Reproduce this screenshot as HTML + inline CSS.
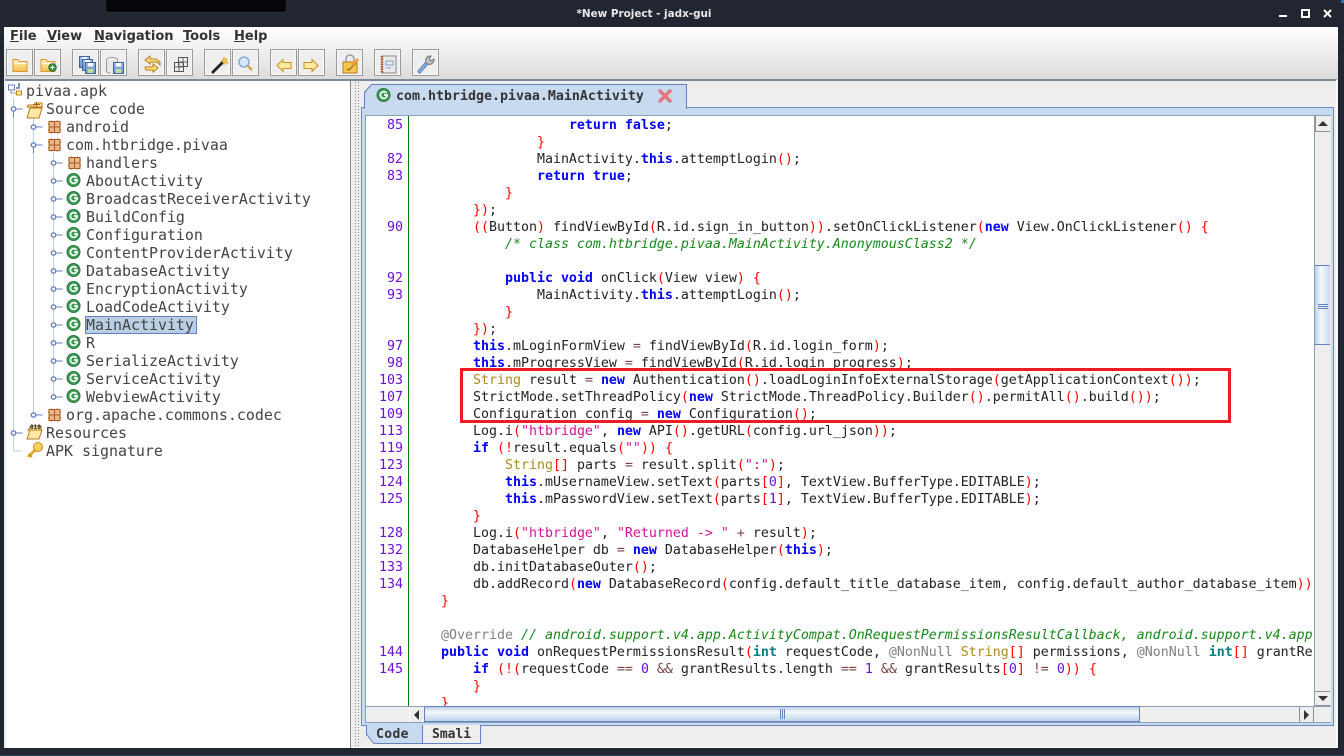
<!DOCTYPE html>
<html><head><meta charset="utf-8"><title>jadx-gui</title>
<style>
html,body{margin:0;padding:0;width:1344px;height:756px;overflow:hidden;background:#222630}
div,pre,span{box-sizing:border-box}
.abs{position:absolute}
#win{position:absolute;left:4px;top:27px;width:1334px;height:721px;background:#eee}
.menu{position:absolute;top:28px;font:bold 13px/18px "DejaVu Sans",sans-serif;color:#333}
.menu u{text-decoration:underline}
.btn{position:absolute;top:49px;width:27px;height:27px;border:1px solid #9a9a9a;box-shadow:inset 0 0 0 1px #f8f8f8;background:#eee}
.tr{position:absolute;height:18px;font:14.95px/18px "DejaVu Sans Mono",monospace;color:#444;white-space:pre}
#code{position:absolute;left:366px;top:116px;width:948px;height:590px;background:#fff;overflow:hidden}
#nums{position:absolute;left:0;top:1px;width:37px;text-align:right;font:13.29px/17px "DejaVu Sans Mono",monospace;color:#6d0fd8;white-space:pre}
#src{position:absolute;left:75px;top:1px;margin:0;font:13.29px/17px "DejaVu Sans Mono",monospace;color:#222;white-space:pre}
.k{color:#00f;font-weight:bold}.p{color:#f00}.o{color:#804040}.s{color:#d9109c}.t{color:#ae8a19}.i{color:#008080;font-weight:bold}
.c{color:#168a16;font-style:italic}.a{color:#808080}.n{color:#6d0fd8}
</style></head><body>
<div class="abs" style="left:105px;top:0;width:182px;height:13px;background:#05060a;border-radius:0 0 4px 4px;border:1px solid #2a2c33;border-top:0"></div>
<div class="abs" style="left:0;top:6px;width:1288px;text-align:center;font:bold 10.4px/16px 'DejaVu Sans',sans-serif;color:#e8e8e8">*New Project - jadx-gui</div>
<svg class="abs" style="left:1270px;top:5px" width="70" height="18">
<rect x="9" y="10" width="8" height="2" fill="#fff"/>
<rect x="32" y="5" width="7" height="7" fill="none" stroke="#fff" stroke-width="2"/>
<path d="M54 5l7 7M61 5l-7 7" stroke="#fff" stroke-width="2"/>
</svg>
<div class="abs" style="left:1341px;top:0;width:3px;height:3px;background:#2a6fb0"></div>
<div class="abs" style="left:0;top:755px;width:1344px;height:1px;background:#26465e"></div>
<div id="win"></div>
<div class="abs" style="left:4px;top:27px;width:1334px;height:52px;background:linear-gradient(#fff,#dcdcdc)"></div>
<div class="abs" style="left:5px;top:79px;width:1332px;height:2px;background:#7b8a9a"></div>
<div class="abs" style="left:1336px;top:80px;width:1px;height:668px;background:#fff"></div>
<div class="abs" style="left:4px;top:747px;width:1334px;height:1px;background:#fff"></div>

<div class="menu" style="left:10px"><u>F</u>ile</div>
<div class="menu" style="left:47px"><u>V</u>iew</div>
<div class="menu" style="left:94px"><u>N</u>avigation</div>
<div class="menu" style="left:183px"><u>T</u>ools</div>
<div class="menu" style="left:234px"><u>H</u>elp</div>

<div class="btn" style="left:6px"></div><div class="btn" style="left:34px"></div>
<div class="btn" style="left:72px"></div><div class="btn" style="left:100px"></div>
<div class="btn" style="left:138px"></div><div class="btn" style="left:166px"></div>
<div class="btn" style="left:204px"></div><div class="btn" style="left:232px"></div>
<div class="btn" style="left:270px"></div><div class="btn" style="left:298px"></div>
<div class="btn" style="left:336px"></div><div class="btn" style="left:374px"></div><div class="btn" style="left:412px"></div>

<svg class="abs" style="left:0;top:40px" width="450" height="40">
<defs>
<linearGradient id="fy" x1="0" y1="0" x2="0" y2="1"><stop offset="0" stop-color="#fff3b8"/><stop offset="1" stop-color="#f2c04a"/></linearGradient>
<linearGradient id="bl" x1="0" y1="0" x2="0" y2="1"><stop offset="0" stop-color="#a9c4ea"/><stop offset="1" stop-color="#5c84c4"/></linearGradient>
<g id="folder"><path d="M0 1.500h5l1.500 2h7.500v10h-14z" fill="url(#fy)" stroke="#d8963a"/><path d="M.5 5.500h13" stroke="#fff"/></g>
<g id="floppy"><rect x=".5" y=".5" width="10" height="11" fill="url(#bl)" stroke="#3f63a6"/><rect x="3" y="1" width="5" height="3.500" fill="#fff"/><rect x="2.500" y="7" width="6" height="4" fill="#bfe39a"/></g>
</defs>
<use href="#folder" x="13" y="18"/>
<use href="#folder" x="41" y="18"/><circle cx="52.500" cy="27.500" r="3.700" fill="#3d9a48" stroke="#24662d"/><path d="M50.500 27.500h4M52.500 25.500v4" stroke="#fff"/>
<use href="#floppy" x="79" y="16"/><use href="#floppy" x="82" y="19"/><use href="#floppy" x="85" y="22"/>
<ellipse cx="112" cy="20" rx="5.500" ry="2.500" fill="#f2f2f2" stroke="#999"/><rect x="107" y="20" width="10" height="11" fill="#e8e8e8"/><path d="M106.500 20v11c0 1 2 2 4 2M117.500 20v3" fill="none" stroke="#999"/>
<use href="#floppy" x="113" y="22"/>
<path d="M150 16l-5 4 5 4v-2h7l3 3v-3l-4-3h-6z" fill="#ffe27a" stroke="#b6801c"/><path d="M153 24l5 4-5 4v-2h-7l-1-3h8z" fill="#ffe27a" stroke="#b6801c"/>
<rect x="174.500" y="22.500" width="9" height="9" fill="none" stroke="#555"/><rect x="178.500" y="17.500" width="9" height="9" fill="none" stroke="#555"/><path d="M174 27h9M179 22v9M183 18v8M179 22h8" fill="none" stroke="#666"/>
<path d="M211 32l11-11 2 2-11 11z" fill="#222"/><path d="M222 21l2 2" stroke="#ddd"/><path d="M224 17l1 2 2 0-1 2 2 2-3 0-1 2-1-3-2-1 2-1z" fill="#ffc93a" stroke="#d89520" stroke-width=".6"/>
<circle cx="244" cy="22" r="5" fill="#d5e7f8" stroke="#7da2cf" stroke-width="1.300"/><path d="M248 26l4 4" stroke="#d8a441" stroke-width="2.500"/>
<path d="M277 25.500l6-6v3h8v6h-8v3z" fill="#ffeaa0" stroke="#c4931f"/>
<path d="M318 25.500l-6-6v3h-8v6h8v3z" fill="#ffeaa0" stroke="#c4931f"/>
<rect x="343" y="22" width="14" height="11" fill="#f5c74d" stroke="#b57b1d"/><path d="M346 22v-3a4 4 0 0 1 8 0v3" fill="none" stroke="#999" stroke-width="1.500"/><path d="M347 29l2 1 7-7" stroke="#7a5a12" fill="none"/><path d="M351 24l6-6 2 2-6 6z" fill="#f7a13d"/>
<rect x="382" y="16" width="14" height="17" fill="#eaeaea" stroke="#888"/><path d="M382 16v17" stroke="#b5522a" stroke-width="2.500" stroke-dasharray="1.500 1"/><path d="M386 21h7v4h-7zM386 28h5" fill="none" stroke="#7da2cf"/>
<path d="M419 33l-1-2 8-9c-1-3 1-6 5-6l-2 3 2 2 3-2c0 4-3 6-6 5l-8 9z" fill="#8cb0e0" stroke="#5b7fb8"/><path d="M426 22c-1-3 1-6 5-6l-2 3 2 2 3-2c0 4-3 6-6 5z" fill="#c9c9c9" stroke="#777"/>
</svg>

<!-- tree panel -->
<div class="abs" style="left:6px;top:81px;width:344px;height:667px;background:#fff"></div>
<div class="abs" style="left:350px;top:81px;width:1px;height:667px;background:#8b8b8b"></div>
<div class="abs" style="left:354px;top:81px;width:6px;height:667px;background-image:radial-gradient(#888 .6px,transparent .8px);background-size:3px 3px"></div>

<div class="abs" style="left:85px;top:316px;width:112px;height:18px;background:#b8cfe5;border:1px solid #6382bf"></div>

<svg class="abs" style="left:0;top:81px" width="350" height="400">
<defs>
<g id="pk"><rect x="-5.500" y="-5.500" width="11" height="11" fill="#e8b88a" stroke="#a85a1c"/><path d="M0-5.500v11M-5.500 0h11" stroke="#a85a1c"/><path d="M-3-5.500v-1M3-5.500v-1M-3 5.500v1M3 5.500v1M-5.500-3h-1M-5.500 3h-1M5.500-3h1M5.500 3h1" stroke="#a85a1c"/></g>
<g id="cl"><circle r="6.500" fill="#3d9a55" stroke="#2b7a3e"/><path d="M3-2A3.400 3.400 0 1 0 3 2M.5 0H3.500V2" fill="none" stroke="#fff" stroke-width="1.700"/></g>
<g id="hd"><path d="M2 0h7" stroke="#6382bf"/><circle r="2.200" fill="#fff" stroke="#6382bf" stroke-width="1.400"/></g>
<g id="hdo"><path d="M2 0h7M0 2v6" stroke="#6382bf"/><circle r="2.200" fill="#fff" stroke="#6382bf" stroke-width="1.400"/></g>
</defs>
<path d="M13.500 17v353h8M33.500 35v298M53.500 71v244" stroke="#b8cfe5" fill="none"/>
<path d="M8.500 4h6v5h-6z" fill="#fff" stroke="#6382bf"/><path d="M16.500 10h5v4h-5z" fill="#fff1b0" stroke="#c08a1e"/><path d="M19 2v5h-3" stroke="#5575b5" stroke-width="1.500" fill="none"/><path d="M11 9v3h5" stroke="#999" fill="none"/>
<use href="#hdo" x="13.500" y="28"/>
<path d="M28 24h6l1-2h7v4h-15zM27 37l3-10h12l-3 10z" fill="#ffe8a5" stroke="#b57b1d"/><path d="M33 23.500h7M36.500 21v6" stroke="#a85a1c"/>
<use href="#hd" x="33.500" y="46"/><use href="#pk" x="54.500" y="46"/>
<use href="#hdo" x="33.500" y="64"/><use href="#pk" x="54.500" y="64"/>
<use href="#hd" x="53.500" y="82"/><use href="#pk" x="74.500" y="82"/>
<g id="rows">
<use href="#hd" x="53.500" y="100"/><use href="#cl" x="73.500" y="99"/>
<use href="#hd" x="53.500" y="118"/><use href="#cl" x="73.500" y="117"/>
<use href="#hd" x="53.500" y="136"/><use href="#cl" x="73.500" y="135"/>
<use href="#hd" x="53.500" y="154"/><use href="#cl" x="73.500" y="153"/>
<use href="#hd" x="53.500" y="172"/><use href="#cl" x="73.500" y="171"/>
<use href="#hd" x="53.500" y="190"/><use href="#cl" x="73.500" y="189"/>
<use href="#hd" x="53.500" y="208"/><use href="#cl" x="73.500" y="207"/>
<use href="#hd" x="53.500" y="226"/><use href="#cl" x="73.500" y="225"/>
<use href="#hd" x="53.500" y="244"/><use href="#cl" x="73.500" y="243"/>
<use href="#hd" x="53.500" y="262"/><use href="#cl" x="73.500" y="261"/>
<use href="#hd" x="53.500" y="280"/><use href="#cl" x="73.500" y="279"/>
<use href="#hd" x="53.500" y="298"/><use href="#cl" x="73.500" y="297"/>
<use href="#hd" x="53.500" y="316"/><use href="#cl" x="73.500" y="315"/>
</g>
<use href="#hd" x="33.500" y="334"/><use href="#pk" x="54.500" y="334"/>
<use href="#hd" x="13.500" y="352"/>
<path d="M31 345h10v4H28zM27 358l3-9h12l-3 9z" fill="#ffe8a5" stroke="#b57b1d"/>
<text x="30" y="348" font-family="DejaVu Sans Mono" font-size="6" font-weight="bold" fill="#222">010</text>
<path d="M28 376l8-8" stroke="#e3ac32" stroke-width="3"/><circle cx="38" cy="366" r="4.500" fill="#f5d25e" stroke="#c48c1e"/><path d="M29 373l3 3" stroke="#c48c1e" stroke-width="1.500"/>
</svg>

<div class="tr" style="left:26px;top:82px">pivaa.apk</div>
<div class="tr" style="left:46px;top:100px">Source code</div>
<div class="tr" style="left:66px;top:118px">android</div>
<div class="tr" style="left:66px;top:136px">com.htbridge.pivaa</div>
<div class="tr" style="left:86px;top:154px">handlers</div>
<div class="tr" style="left:86px;top:172px">AboutActivity</div>
<div class="tr" style="left:86px;top:190px">BroadcastReceiverActivity</div>
<div class="tr" style="left:86px;top:208px">BuildConfig</div>
<div class="tr" style="left:86px;top:226px">Configuration</div>
<div class="tr" style="left:86px;top:244px">ContentProviderActivity</div>
<div class="tr" style="left:86px;top:262px">DatabaseActivity</div>
<div class="tr" style="left:86px;top:280px">EncryptionActivity</div>
<div class="tr" style="left:86px;top:298px">LoadCodeActivity</div>
<div class="tr" style="left:86px;top:316px">MainActivity</div>
<div class="tr" style="left:86px;top:334px">R</div>
<div class="tr" style="left:86px;top:352px">SerializeActivity</div>
<div class="tr" style="left:86px;top:370px">ServiceActivity</div>
<div class="tr" style="left:86px;top:388px">WebviewActivity</div>
<div class="tr" style="left:66px;top:406px">org.apache.commons.codec</div>
<div class="tr" style="left:46px;top:424px">Resources</div>
<div class="tr" style="left:46px;top:442px">APK signature</div>

<!-- editor frame -->
<div class="abs" style="left:361px;top:107px;width:973px;height:619px;background:#c8daef;border:1px solid #6f8ab8"></div>
<div class="abs" style="left:364px;top:84px;width:323px;height:25px;background:#c8daef;border:1px solid #6382bf;border-bottom:0;clip-path:polygon(8px 0,100% 0,100% 100%,0 100%,0 8px)"></div>
<div class="abs" style="left:364px;top:84px;width:323px;height:1px;background:#6382bf;clip-path:inset(0 0 0 8px)"></div>
<svg class="abs" style="left:364px;top:84px" width="12" height="12"><path d="M.5 8.500L7.500 .5" stroke="#6382bf"/></svg>
<svg class="abs" style="left:376px;top:88px" width="16" height="16"><circle cx="7.500" cy="7" r="6.500" fill="#3d9a55" stroke="#2b7a3e"/><path d="M10.500 5A3.400 3.400 0 1 0 10.500 9M8 7H11V9" fill="none" stroke="#fff" stroke-width="1.700"/></svg>
<div class="abs" style="left:396px;top:88px;font:bold 13.29px/17px 'DejaVu Sans Mono',monospace;color:#333;white-space:pre">com.htbridge.pivaa.MainActivity</div>
<svg class="abs" style="left:658px;top:89px" width="14" height="14"><path d="M2 2l10 10M12 2L2 12" stroke="#e8757a" stroke-width="3.400" stroke-linecap="round"/></svg>
<div class="abs" style="left:365px;top:115px;width:966px;height:608px;background:#eee;border:1px solid #8c9fb8"></div>

<div id="code">
<div class="abs" style="left:42px;top:0;width:1px;height:590px;background:#008000"></div>
<div id="nums">85

82
83


90


92
93


97
98
103
107
109
113
119
123
124
125

128
132
133
134


 
144
145</div>
<pre id="src">                <span class="k">return false</span>;
            <span class="p">}</span>
            MainActivity.<span class="k">this</span>.attemptLogin<span class="p">()</span>;
            <span class="k">return true</span>;
        <span class="p">}</span>
    <span class="p">})</span>;
    <span class="p">((</span>Button<span class="p">)</span> findViewById<span class="p">(</span>R.id.sign_in_button<span class="p">))</span>.setOnClickListener<span class="p">(</span><span class="k">new</span> View.OnClickListener<span class="p">()</span> <span class="p">{</span>
        <span class="c">/* class com.htbridge.pivaa.MainActivity.AnonymousClass2 */</span>

        <span class="k">public void</span> onClick<span class="p">(</span>View view<span class="p">)</span> <span class="p">{</span>
            MainActivity.<span class="k">this</span>.attemptLogin<span class="p">()</span>;
        <span class="p">}</span>
    <span class="p">})</span>;
    <span class="k">this</span>.mLoginFormView <span class="o">=</span> findViewById<span class="p">(</span>R.id.login_form<span class="p">)</span>;
    <span class="k">this</span>.mProgressView <span class="o">=</span> findViewById<span class="p">(</span>R.id.login_progress<span class="p">)</span>;
    <span class="t">String</span> result <span class="o">=</span> <span class="k">new</span> Authentication<span class="p">()</span>.loadLoginInfoExternalStorage<span class="p">(</span>getApplicationContext<span class="p">())</span>;
    StrictMode.setThreadPolicy<span class="p">(</span><span class="k">new</span> StrictMode.ThreadPolicy.Builder<span class="p">()</span>.permitAll<span class="p">()</span>.build<span class="p">())</span>;
    Configuration config <span class="o">=</span> <span class="k">new</span> Configuration<span class="p">()</span>;
    Log.i<span class="p">(</span><span class="s">"htbridge"</span>, <span class="k">new</span> API<span class="p">()</span>.getURL<span class="p">(</span>config.url_json<span class="p">))</span>;
    <span class="k">if</span> <span class="p">(!</span>result.equals<span class="p">(</span><span class="s">""</span><span class="p">))</span> <span class="p">{</span>
        <span class="t">String</span><span class="p">[]</span> parts <span class="o">=</span> result.split<span class="p">(</span><span class="s">":"</span><span class="p">)</span>;
        <span class="k">this</span>.mUsernameView.setText<span class="p">(</span>parts<span class="p">[</span><span class="n">0</span><span class="p">]</span>, TextView.BufferType.EDITABLE<span class="p">)</span>;
        <span class="k">this</span>.mPasswordView.setText<span class="p">(</span>parts<span class="p">[</span><span class="n">1</span><span class="p">]</span>, TextView.BufferType.EDITABLE<span class="p">)</span>;
    <span class="p">}</span>
    Log.i<span class="p">(</span><span class="s">"htbridge"</span>, <span class="s">"Returned -&gt; "</span> <span class="o">+</span> result<span class="p">)</span>;
    DatabaseHelper db <span class="o">=</span> <span class="k">new</span> DatabaseHelper<span class="p">(</span><span class="k">this</span><span class="p">)</span>;
    db.initDatabaseOuter<span class="p">()</span>;
    db.addRecord<span class="p">(</span><span class="k">new</span> DatabaseRecord<span class="p">(</span>config.default_title_database_item, config.default_author_database_item<span class="p">))</span>;
<span class="p">}</span>

<span class="a">@Override</span> <span class="c">// android.support.v4.app.ActivityCompat.OnRequestPermissionsResultCallback, android.support.v4.app.ActivityCompat.OnRequest</span>
<span class="k">public void</span> onRequestPermissionsResult<span class="p">(</span><span class="i">int</span> requestCode, <span class="a">@NonNull</span> <span class="t">String</span><span class="p">[]</span> permissions, <span class="a">@NonNull</span> <span class="i">int</span><span class="p">[]</span> grantResults<span class="p">)</span> <span class="p">{</span>
    <span class="k">if</span> <span class="p">(!(</span>requestCode <span class="o">==</span> <span class="n">0</span> <span class="o">&amp;&amp;</span> grantResults.length <span class="o">==</span> <span class="n">1</span> <span class="o">&amp;&amp;</span> grantResults<span class="p">[</span><span class="n">0</span><span class="p">]</span> <span class="o">!=</span> <span class="n">0</span><span class="p">))</span> <span class="p">{</span>
    <span class="p">}</span>
<span class="p">}</span></pre>
</div>

<!-- vertical scrollbar -->
<div class="abs" style="left:1314px;top:116px;width:17px;height:606px;background:#eee;border-left:1px solid #8c9fb8"></div>
<div class="abs" style="left:1315px;top:116px;width:15px;height:16px;background:#eee;border:1px solid #8e8e8e;border-top:0;border-right:0"></div>
<svg class="abs" style="left:1317px;top:120px" width="12" height="8"><path d="M6 1l5 5H1z" fill="#333"/></svg>
<div class="abs" style="left:1315px;top:265px;width:15px;height:80px;background:linear-gradient(90deg,#b8cfe5,#f4f8fc 40%,#c8daef);border:1px solid #6382bf;border-left:0;border-right:0"></div>
<div class="abs" style="left:1318px;top:304px;width:10px;height:5px;border-top:1px solid #6382bf;border-bottom:1px solid #6382bf"></div>
<div class="abs" style="left:1318px;top:306px;width:10px;height:1px;background:#6382bf"></div>
<div class="abs" style="left:1315px;top:691px;width:15px;height:15px;background:#eee;border:1px solid #8e8e8e;border-right:0;border-left:0"></div>
<svg class="abs" style="left:1317px;top:695px" width="12" height="8"><path d="M1 1h10L6 6z" fill="#333"/></svg>
<!-- horizontal scrollbar -->
<div class="abs" style="left:366px;top:706px;width:965px;height:16px;background:#eee;border-top:1px solid #8c9fb8"></div>
<div class="abs" style="left:409px;top:707px;width:16px;height:15px;background:#eee;border-left:1px solid #fff;border-right:1px solid #6382bf"></div>
<svg class="abs" style="left:413px;top:710px" width="8" height="12"><path d="M6 0v10L1 5z" fill="#333"/></svg>
<div class="abs" style="left:425px;top:706px;width:715px;height:16px;background:linear-gradient(#b8cfe5,#f4f8fc 35%,#c0d4ea);border:1px solid #6382bf;border-left:0"></div>
<div class="abs" style="left:780px;top:709px;width:5px;height:10px;border-left:1px solid #6382bf;border-right:1px solid #6382bf"></div>
<div class="abs" style="left:782px;top:709px;width:1px;height:10px;background:#6382bf"></div>
<div class="abs" style="left:1299px;top:707px;width:15px;height:15px;background:#eee;border-left:1px solid #8e8e8e;border-right:1px solid #8e8e8e"></div>
<svg class="abs" style="left:1303px;top:710px" width="8" height="12"><path d="M1 0v10l5-5z" fill="#333"/></svg>
<div class="abs" style="left:366px;top:722px;width:965px;height:1px;background:#8c9fb8"></div>

<!-- bottom tabs -->
<div class="abs" style="left:366px;top:725px;width:57px;height:19px;background:#c8daef;border:1px solid #6382bf;border-top:0;clip-path:polygon(0 0,100% 0,100% 100%,8px 100%,0 10px)"></div>
<svg class="abs" style="left:366px;top:733px" width="10" height="12"><path d="M.5 1l7 9.500" stroke="#6382bf"/></svg>
<div class="abs" style="left:376px;top:726px;font:bold 13px/17px 'DejaVu Sans Mono',monospace;letter-spacing:.4px;color:#333">Code</div>
<div class="abs" style="left:423px;top:725px;width:58px;height:19px;background:#eee;border:1px solid #6382bf;border-left:0;border-top:0"></div>
<div class="abs" style="left:432px;top:726px;font:bold 13px/17px 'DejaVu Sans Mono',monospace;color:#333">Smali</div>

<!-- red highlight -->
<div class="abs" style="left:460px;top:368px;width:771px;height:55px;border:3px solid #ed1c24"></div>
</body></html>
